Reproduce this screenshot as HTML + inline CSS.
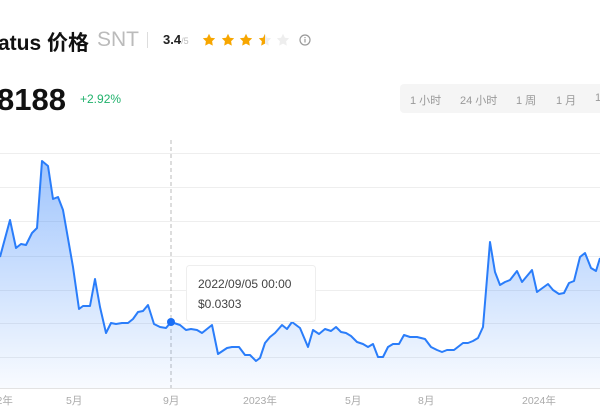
<!DOCTYPE html>
<html><head><meta charset="utf-8"><style>
body{margin:0;width:600px;height:420px;overflow:hidden;background:#fff;font-family:"Liberation Sans","Noto Sans CJK SC",sans-serif;position:relative}
.a{position:absolute;white-space:nowrap}
</style></head><body>
<div class="a" style="left:-2px;top:27px;font-size:21px;font-weight:bold;color:#111">atus 价格</div>
<div class="a" style="left:97px;top:28px;font-size:21px;color:#bbb">SNT</div>
<div class="a" style="left:147px;top:32px;width:1px;height:16px;background:#ddd"></div>
<div class="a" style="left:163px;top:32px;font-size:13px;font-weight:bold;color:#222">3.4<span style="font-size:9px;color:#bbb;font-weight:normal">/5</span></div>
<svg class="a" style="left:200px;top:31px" width="115" height="18" viewBox="0 0 115 18">
<defs><path id="s" d="M6.5 0.3l1.9 3.9 4.3.6-3.1 3 .7 4.3-3.8-2-3.8 2 .7-4.3-3.1-3 4.3-.6z"/>
<clipPath id="h"><rect x="0" y="0" width="6.5" height="13"/></clipPath></defs>
<g transform="translate(2.5,2.5)" fill="#f7a600"><use href="#s"/></g>
<g transform="translate(21.5,2.5)" fill="#f7a600"><use href="#s"/></g>
<g transform="translate(39.5,2.5)" fill="#f7a600"><use href="#s"/></g>
<g transform="translate(58.5,2.5)"><use href="#s" fill="#eee"/><use href="#s" fill="#f7a600" clip-path="url(#h)"/></g>
<g transform="translate(76.5,2.5)" fill="#eee"><use href="#s"/></g>
<circle cx="105" cy="9" r="5" fill="none" stroke="#999" stroke-width="1.2"/>
<rect x="104.4" y="8" width="1.2" height="3.5" fill="#999"/><rect x="104.4" y="6" width="1.2" height="1.2" fill="#999"/>
</svg>
<div class="a" style="left:-3px;top:82px;font-size:31px;font-weight:bold;color:#111">8188</div>
<div class="a" style="left:80px;top:92px;font-size:12px;color:#20b26c">+2.92%</div>
<div class="a" style="left:400px;top:84px;width:210px;height:29px;background:#f5f5f5;border-radius:4px"></div>
<div class="a" style="left:410px;top:92px;font-size:11px;color:#999">1 小时</div>
<div class="a" style="left:460px;top:92px;font-size:11px;color:#999">24 小时</div>
<div class="a" style="left:516px;top:92px;font-size:11px;color:#999">1 周</div>
<div class="a" style="left:556px;top:92px;font-size:11px;color:#999">1 月</div>
<div class="a" style="left:595px;top:92px;font-size:11px;color:#999">1</div>
<svg class="a" style="left:0;top:0" width="600" height="420">
<defs><linearGradient id="g" x1="0" y1="0" x2="0" y2="1"><stop offset="0" stop-color="#2a7dfa" stop-opacity=".45"/><stop offset="1" stop-color="#2a7dfa" stop-opacity=".03"/></linearGradient></defs>
<g stroke="#eee" stroke-width="1">
<line x1="0" y1="153.5" x2="600" y2="153.5"/><line x1="0" y1="187.5" x2="600" y2="187.5"/><line x1="0" y1="221.5" x2="600" y2="221.5"/><line x1="0" y1="256.5" x2="600" y2="256.5"/><line x1="0" y1="290.5" x2="600" y2="290.5"/><line x1="0" y1="323.5" x2="600" y2="323.5"/><line x1="0" y1="357.5" x2="600" y2="357.5"/></g>
<line x1="0" y1="388.5" x2="600" y2="388.5" stroke="#e3e3e3"/>
<line x1="171" y1="140" x2="171" y2="388" stroke="#bbb" stroke-dasharray="4,3"/>
<path id="ln" d="M0,257 L10,220 16,248 21,244 26,245 32,233 37,228 42,161 48,166 53,199 58,197 63,210 73,267 79,309 83,306 90,306 95,279 100,307 106,333 111,323 116,324 122,323 128,323 133,319 138,312 143,311 148,305 154,324 160,327 166,328 171,322 180,325 186,330 191,329 197,330 202,333 212,325 218,354 227,348 232,347 239,347 245,355 250,355 256,361 260,358 265,343 270,337 275,333 282,325 287,329 292,322 300,328 308,347 313,330 319,334 325,329 331,331 336,327 341,332 346,333 351,336 357,342 363,344 368,347 373,344 378,357 383,357 388,347 393,344 399,344 404,335 410,337 417,337 425,339 431,347 437,350 442,352 447,350 454,350 463,343 468,343 473,341 478,338 483,327 490,242 495,272 500,285 505,282 510,280 517,271 522,282 532,270 537,292 548,284 553,290 559,294 564,293 569,283 574,281 580,257 585,253 591,268 596,271 600,258" fill="none"/>
<path d="M0,257 L10,220 16,248 21,244 26,245 32,233 37,228 42,161 48,166 53,199 58,197 63,210 73,267 79,309 83,306 90,306 95,279 100,307 106,333 111,323 116,324 122,323 128,323 133,319 138,312 143,311 148,305 154,324 160,327 166,328 171,322 180,325 186,330 191,329 197,330 202,333 212,325 218,354 227,348 232,347 239,347 245,355 250,355 256,361 260,358 265,343 270,337 275,333 282,325 287,329 292,322 300,328 308,347 313,330 319,334 325,329 331,331 336,327 341,332 346,333 351,336 357,342 363,344 368,347 373,344 378,357 383,357 388,347 393,344 399,344 404,335 410,337 417,337 425,339 431,347 437,350 442,352 447,350 454,350 463,343 468,343 473,341 478,338 483,327 490,242 495,272 500,285 505,282 510,280 517,271 522,282 532,270 537,292 548,284 553,290 559,294 564,293 569,283 574,281 580,257 585,253 591,268 596,271 600,258 L600,388 0,388Z" fill="url(#g)"/>
<use href="#ln" stroke="#2a7dfa" stroke-width="2" stroke-linejoin="round"/>
<circle cx="171" cy="322" r="4" fill="#1a6ef5"/>
<rect x="186.5" y="265.5" width="129" height="56" rx="3" fill="#fff" stroke="#eee"/>
<text x="198" y="288" font-size="12" fill="#444" font-family="Liberation Sans">2022/09/05 00:00</text>
<text x="198" y="308" font-size="12" fill="#444" font-family="Liberation Sans">$0.0303</text>
<g font-size="10.5" fill="#aaa" font-family="Liberation Sans,Noto Sans CJK SC,sans-serif">
<text x="-21" y="404">2022年</text><text x="66" y="404">5月</text><text x="163" y="404">9月</text><text x="243" y="404">2023年</text><text x="345" y="404">5月</text><text x="418" y="404">8月</text><text x="522" y="404">2024年</text></g>
</svg>
</body></html>
